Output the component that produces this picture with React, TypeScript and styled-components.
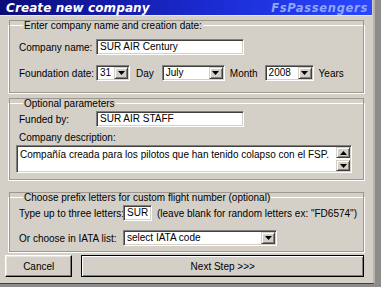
import React from "react";
import styled, { createGlobalStyle } from "styled-components";

const GlobalStyle = createGlobalStyle`
  html, body {
    margin: 0;
    padding: 0;
    background: #8c8c8c;
  }
  body {
    width: 381px;
    height: 287px;
    overflow: hidden;
    font-family: "Liberation Sans", Arial, sans-serif;
    font-size: 10px;
    color: #000;
  }
`;

const Window = styled.div`
  width: 375px;
  height: 284px;
  background: #d4d0c8;
  border-right: 2px solid #b8b4ac;
  border-bottom: 1px solid #404040;
  box-sizing: border-box;
  display: flex;
  flex-direction: column;
`;

const TitleBar = styled.div`
  height: 15px;
  margin-right: 1px;
  display: flex;
  align-items: center;
  justify-content: space-between;
  padding: 0 4px 0 6px;
  background: linear-gradient(to right, #0c0c78 0%, #1a2ad0 55%, #2a48ff 100%);
  border-bottom: 1px solid #e8e8f4;
  font-family: "DejaVu Sans", Verdana, sans-serif;
  font-weight: bold;
  font-style: italic;
`;

const Title = styled.span`
  color: #fff;
  font-size: 12px;
  letter-spacing: 0.1px;
`;

const Brand = styled.span`
  color: #8fa6ff;
  font-size: 11.5px;
  letter-spacing: 0.7px;
`;

const Body = styled.div`
  flex: 1;
  display: flex;
  flex-direction: column;
  padding: 3px 8px 0 8px;
`;

const Group = styled.fieldset<{ $gapTop: number; $padTop: number; $padBottom: number }>`
  margin: ${(p) => p.$gapTop}px 0 0 0;
  padding: ${(p) => p.$padTop}px 8px ${(p) => p.$padBottom}px 10px;
  border: 1px solid #ffffff;
  outline: 1px solid #9c9890;
  outline-offset: -2px;
  min-width: 0;
  display: flex;
  flex-direction: column;
`;

const Legend = styled.legend`
  padding: 0 1px;
  margin-left: 4px;
  line-height: 13px;
  background: #d4d0c8;
`;

const Row = styled.div<{ $gap?: number; $label: number }>`
  display: grid;
  grid-template-columns: ${(p) => p.$label}px auto;
  align-items: center;
  margin-top: ${(p) => p.$gap ?? 0}px;
`;

const Inline = styled.div`
  display: flex;
  align-items: center;
`;

const Label = styled.span<{ $ml?: number; $mt?: number }>`
  white-space: nowrap;
  margin-left: ${(p) => p.$ml ?? 0}px;
  margin-top: ${(p) => p.$mt ?? 0}px;
`;

const TextBox = styled.div<{ $w: number }>`
  width: ${(p) => p.$w}px;
  height: 16px;
  box-sizing: border-box;
  background: #fff;
  border-top: 1px solid #808080;
  border-left: 1px solid #808080;
  border-right: 1px solid #fff;
  border-bottom: 1px solid #fff;
  box-shadow: inset 1px 1px 0 #404040, inset -1px -1px 0 #d4d0c8;
  padding: 0 3px;
  line-height: 14px;
  white-space: nowrap;
  overflow: hidden;
`;

const Combo = styled(TextBox)<{ $ml?: number }>`
  display: flex;
  align-items: center;
  justify-content: space-between;
  padding: 0 1px 0 3px;
  margin-left: ${(p) => p.$ml ?? 0}px;
`;

const ArrowButton = styled.span<{ $h?: number }>`
  width: 14px;
  height: ${(p) => p.$h ?? 12}px;
  box-sizing: border-box;
  background: #d4d0c8;
  border-top: 1px solid #d4d0c8;
  border-left: 1px solid #d4d0c8;
  border-right: 1px solid #404040;
  border-bottom: 1px solid #404040;
  box-shadow: inset 1px 1px 0 #fff, inset -1px -1px 0 #808080;
  display: flex;
  align-items: center;
  justify-content: center;
  flex: none;
`;

const Arrow = ({ up }: { up?: boolean }) => (
  <svg width="7" height="4" viewBox="0 0 7 4">
    <path d={up ? "M0 4 L7 4 L3.5 0 Z" : "M0 0 L7 0 L3.5 4 Z"} fill="#000" />
  </svg>
);

function Select({ value, w, ml }: { value: string; w: number; ml?: number }) {
  return (
    <Combo $w={w} $ml={ml}>
      <span>{value}</span>
      <ArrowButton>
        <Arrow />
      </ArrowButton>
    </Combo>
  );
}

const Memo = styled.div`
  margin-top: 2px;
  width: 336px;
  height: 28px;
  box-sizing: border-box;
  background: #fff;
  border-top: 1px solid #808080;
  border-left: 1px solid #808080;
  border-right: 1px solid #fff;
  border-bottom: 1px solid #fff;
  box-shadow: inset 1px 1px 0 #404040, inset -1px -1px 0 #d4d0c8;
  display: flex;
  margin-left: -3px;
`;

const MemoText = styled.div`
  flex: 1;
  padding: 2px 3px;
  line-height: 13px;
  white-space: nowrap;
  overflow: hidden;
`;

const ScrollBar = styled.div`
  width: 14px;
  padding: 1px 1px 1px 0;
  display: flex;
  flex-direction: column;
  justify-content: space-between;
`;

const Hint = styled.span`
  margin-left: 5px;
  white-space: nowrap;
`;

const Footer = styled.div`
  display: flex;
  gap: 9px;
  margin-top: 2px;
  padding: 0 1px 0 0;
  margin-left: -3px;
`;

const Button = styled.div<{ $w: number; $default?: boolean }>`
  width: ${(p) => p.$w}px;
  height: 22px;
  box-sizing: border-box;
  display: flex;
  align-items: center;
  justify-content: center;
  background: #d4d0c8;
  border: 1px solid ${(p) => (p.$default ? "#000" : "#fff")};
  border-right-color: #000;
  border-bottom-color: #000;
  box-shadow: ${(p) =>
    p.$default
      ? "inset 1px 1px 0 #fff, inset -1px -1px 0 #808080"
      : "inset -1px -1px 0 #808080, inset 1px 1px 0 #e8e6e2"};
`;

export default function App() {
  return (
    <>
      <GlobalStyle />
      <Window>
        <TitleBar>
          <Title>Create new company</Title>
          <Brand>FsPassengers</Brand>
        </TitleBar>
        <Body>
          <Group $gapTop={0} $padTop={7} $padBottom={12}>
            <Legend>Enter company name and creation date:</Legend>
            <Row $label={77}>
              <Label>Company name:</Label>
              <TextBox $w={148}>SUR AIR Century</TextBox>
            </Row>
            <Row $label={77} $gap={10}>
              <Label>Foundation date:</Label>
              <Inline>
                <Select value="31" w={34} />
                <Label $ml={6}>Day</Label>
                <Select value="July" w={63} ml={8} />
                <Label $ml={5}>Month</Label>
                <Select value="2008" w={49} ml={7} />
                <Label $ml={5}>Years</Label>
              </Inline>
            </Row>
          </Group>

          <Group $gapTop={3} $padTop={1} $padBottom={7}>
            <Legend>Optional parameters</Legend>
            <Row $label={77}>
              <Label>Funded by:</Label>
              <TextBox $w={148}>SUR AIR STAFF</TextBox>
            </Row>
            <Label $mt={5}>Company description:</Label>
            <Memo>
              <MemoText>Compañía creada para los pilotos que han tenido colapso con el FSP.</MemoText>
              <ScrollBar>
                <ArrowButton $h={11}>
                  <Arrow up />
                </ArrowButton>
                <ArrowButton $h={11}>
                  <Arrow />
                </ArrowButton>
              </ScrollBar>
            </Memo>
          </Group>

          <Group $gapTop={10} $padTop={1} $padBottom={6}>
            <Legend>Choose prefix letters for custom flight number (optional)</Legend>
            <Row $label={104}>
              <Label>Type up to three letters:</Label>
              <Inline>
                <TextBox $w={29}>SUR</TextBox>
                <Hint>(leave blank for random letters ex: "FD6574")</Hint>
              </Inline>
            </Row>
            <Row $label={104} $gap={9}>
              <Label>Or choose in IATA list:</Label>
              <Select value="select IATA code" w={154} />
            </Row>
          </Group>

          <Footer>
            <Button $w={68}>Cancel</Button>
            <Button $w={285} $default>
              Next Step &gt;&gt;&gt;
            </Button>
          </Footer>
        </Body>
      </Window>
    </>
  );
}
